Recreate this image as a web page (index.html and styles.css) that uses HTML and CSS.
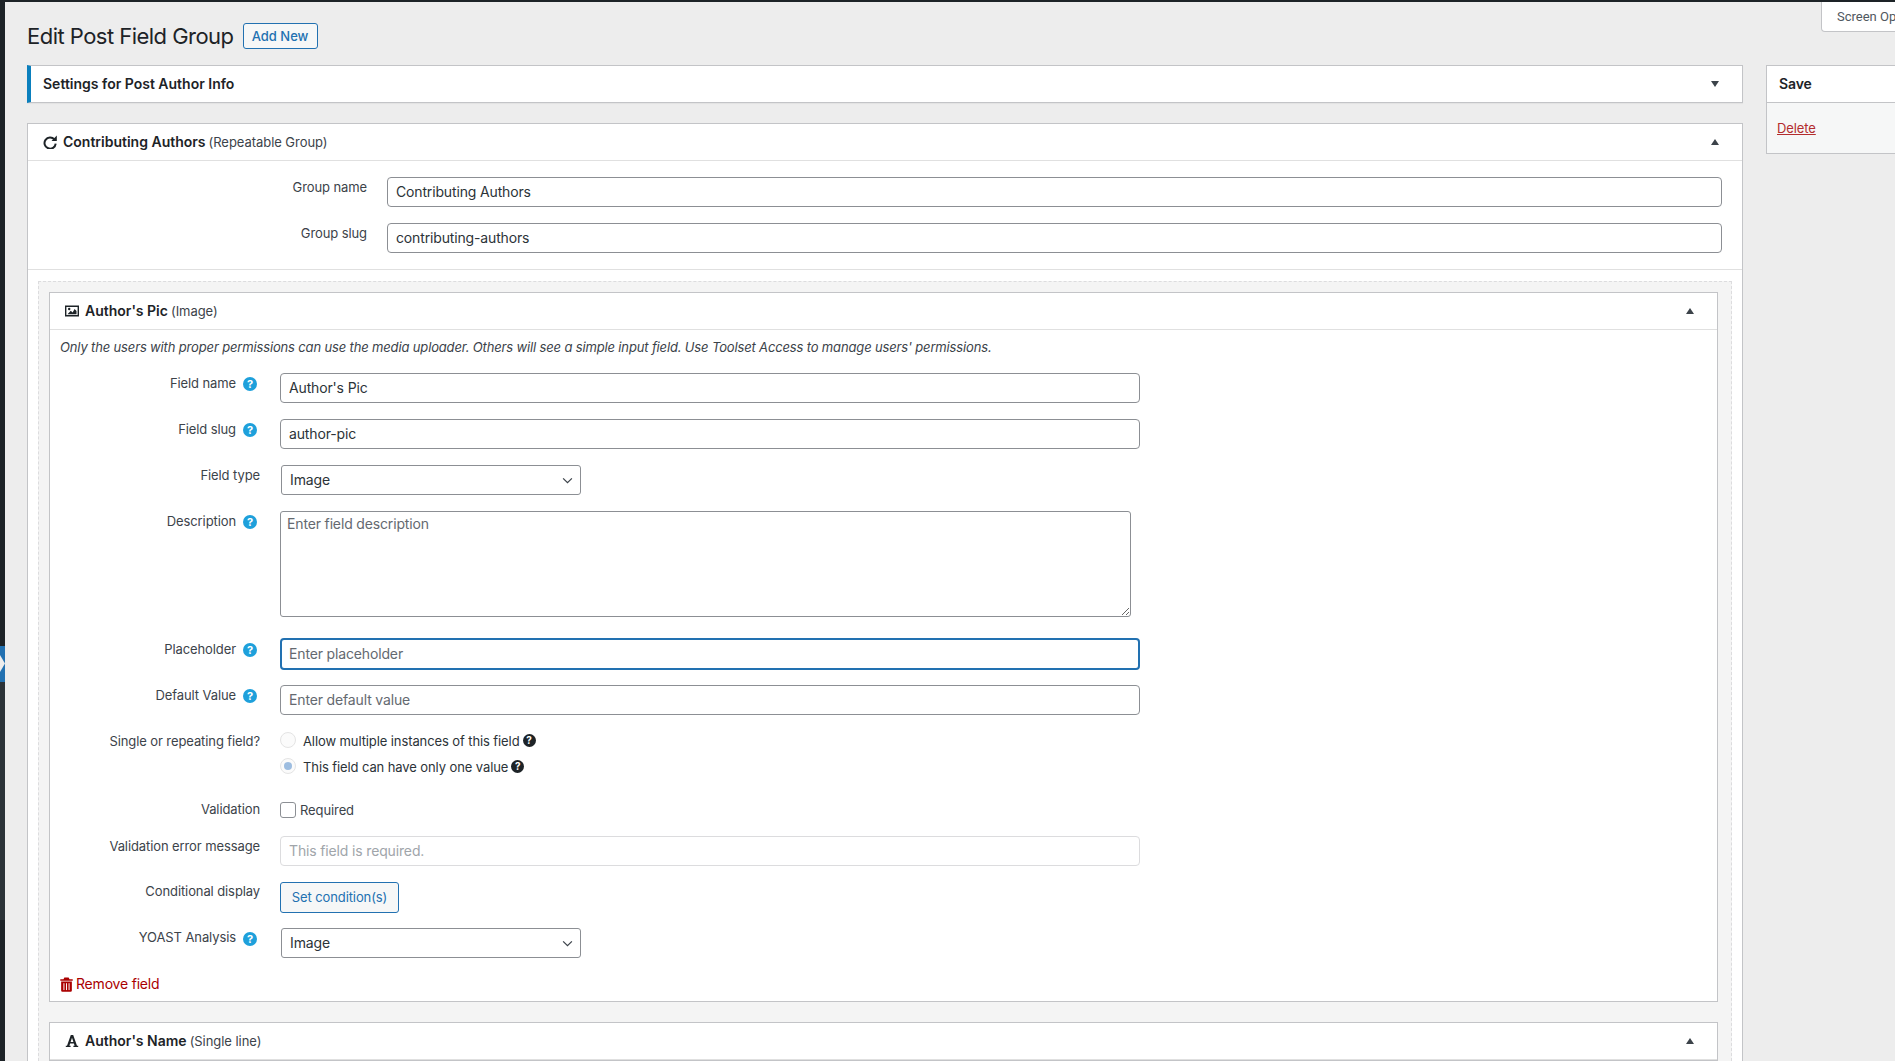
FILE: index.html
```html
<!DOCTYPE html>
<html>
<head>
  <title>Edit Post Field Group</title>
  <meta name="viewport" content="width=device-width, initial-scale=1.0">
  <link rel="stylesheet" href="styles.css">
</head>
<body>

  <div class="topbar"></div>

  <div class="page">
    <!-- admin menu, only its edge is visible -->
    <div class="sidebar">
      <div class="side-top"></div>
      <div class="side-collapse">
        <svg viewBox="0 0 5 36" width="5" height="36"><path d="M0 9 L5 17.5 L0 26 Z" fill="#ededed"/></svg>
      </div>
      <div class="side-mid"></div>
      <div class="side-bottom"></div>
    </div>

    <div class="content">
      <div class="screen-options">Screen Options</div>

      <div class="title-row">
        <h1>Edit Post Field Group</h1>
        <a class="add-new">Add New</a>
      </div>

      <div class="columns">
        <div class="main-col">

          <div class="box box-settings">
            <div class="box-head">
              <span class="box-title">Settings for Post Author Info</span>
              <span class="arrow arrow-down"></span>
            </div>
          </div>

          <div class="box box-group">
            <div class="box-head box-head-line">
              <svg class="head-icon" viewBox="0 0 14 14" width="14" height="14"><path d="M11.4 4.4 A5.6 5.6 0 1 0 12.7 8.6" fill="none" stroke="#1d2327" stroke-width="2"/><path d="M13.8 0.6 V5.9 H8.5 Z" fill="#1d2327"/></svg>
              <span class="box-title">Contributing Authors</span>
              <span class="box-type">(Repeatable Group)</span>
              <span class="arrow arrow-up"></span>
            </div>

            <div class="group-fields">
              <div class="group-row">
                <label>Group name</label>
                <input type="text" class="text-input" value="Contributing Authors">
              </div>
              <div class="group-row">
                <label>Group slug</label>
                <input type="text" class="text-input" value="contributing-authors">
              </div>
            </div>

            <div class="drop-area">
              <div class="field-box">
                <div class="box-head box-head-line">
                  <svg class="head-icon" viewBox="0 0 14 12" width="14" height="12"><path d="M0.7 1.2 H13.3 V10.8 H0.7 Z" fill="none" stroke="#1d2327" stroke-width="1.4"/><path d="M2.5 9.2 L5.8 5.8 L7.6 7.4 L9.6 4 L11.5 6 V9.2 Z" fill="#1d2327"/><circle cx="4.2" cy="4" r="1.2" fill="#1d2327"/></svg>
                  <span class="box-title">Author's Pic</span>
                  <span class="box-type">(Image)</span>
                  <span class="arrow arrow-up"></span>
                </div>

                <div class="field-body">
                  <p class="field-note">Only the users with proper permissions can use the media uploader. Others will see a simple input field. Use Toolset Access to manage users' permissions.</p>

                  <div class="row">
                    <label>Field name <span class="help">?</span></label>
                    <input type="text" class="text-input wide" value="Author's Pic">
                  </div>
                  <div class="row">
                    <label>Field slug <span class="help">?</span></label>
                    <input type="text" class="text-input wide" value="author-pic">
                  </div>
                  <div class="row">
                    <label>Field type</label>
                    <div class="select-box">Image
                      <svg viewBox="0 0 12 8" width="11" height="7"><path d="M1 1.5 L6 6.5 L11 1.5" fill="none" stroke="#3c434a" stroke-width="1.4"/></svg>
                    </div>
                  </div>
                  <div class="row row-desc">
                    <label>Description <span class="help">?</span></label>
                    <div class="textarea-box">
                      <textarea placeholder="Enter field description"></textarea>
                    </div>
                  </div>
                  <div class="row row-focus">
                    <label>Placeholder <span class="help">?</span></label>
                    <input type="text" class="text-input wide focused" placeholder="Enter placeholder">
                  </div>
                  <div class="row row-default">
                    <label>Default Value <span class="help">?</span></label>
                    <input type="text" class="text-input wide" placeholder="Enter default value">
                  </div>
                  <div class="row row-radio">
                    <label>Single or repeating field?</label>
                    <div class="radio-list">
                      <div class="radio-item"><span class="radio"></span>Allow multiple instances of this field<span class="help-dark">?</span></div>
                      <div class="radio-item"><span class="radio radio-on"></span>This field can have only one value<span class="help-dark">?</span></div>
                    </div>
                  </div>
                  <div class="row row-check">
                    <label>Validation</label>
                    <div class="check-item"><span class="checkbox"></span>Required</div>
                  </div>
                  <div class="row row-error">
                    <label>Validation error message</label>
                    <input type="text" class="text-input wide disabled" placeholder="This field is required.">
                  </div>
                  <div class="row row-cond">
                    <label>Conditional display</label>
                    <a class="cond-btn">Set condition(s)</a>
                  </div>
                  <div class="row row-yoast">
                    <label>YOAST Analysis <span class="help">?</span></label>
                    <div class="select-box">Image
                      <svg viewBox="0 0 12 8" width="11" height="7"><path d="M1 1.5 L6 6.5 L11 1.5" fill="none" stroke="#3c434a" stroke-width="1.4"/></svg>
                    </div>
                  </div>

                  <a class="remove-field">
                    <svg viewBox="0 0 12 14" width="13" height="15"><path d="M4 0.5 H8 L8.8 2 H11.8 V3.4 H0.2 V2 H3.2 Z M1 4.3 H11 V12.5 Q11 13.8 9.8 13.8 H2.2 Q1 13.8 1 12.5 Z" fill="#a00"/><path d="M3.6 5.8 V12.2 M6 5.8 V12.2 M8.4 5.8 V12.2" stroke="#fff" stroke-width="0.9"/></svg>
                    Remove field
                  </a>
                </div>
              </div>

              <div class="field-box">
                <div class="box-head box-head-line">
                  <svg class="head-icon" viewBox="0 0 14 14" width="14" height="14"><path d="M0.8 13 V11.8 H2 L5.8 1 H8.2 L12 11.8 H13.2 V13 H8.4 V11.8 H9.6 L8.9 9.6 H5.1 L4.4 11.8 H5.6 V13 Z M5.6 8 H8.4 L7 3.8 Z" fill="#1d2327" fill-rule="evenodd"/></svg>
                  <span class="box-title">Author's Name</span>
                  <span class="box-type">(Single line)</span>
                  <span class="arrow arrow-up"></span>
                </div>
              </div>
            </div>
          </div>

        </div>

        <div class="side-col">
          <div class="save-box">
            <div class="save-head">Save</div>
            <div class="save-foot"><a>Delete</a></div>
          </div>
        </div>
      </div>
    </div>
  </div>

</body>
</html>
```

FILE: styles.css
```css
html, body {
  margin: 0;
  height: 1061px;
  overflow: hidden;
}

body {
  background: #ededed;
  color: #3c434a;
  font-family: Inter, Roboto, sans-serif;
  font-size: 13px;
  letter-spacing: -0.1px;
}

.topbar {
  height: 2px;
  background: #1d2327;
}

.page {
  display: flex;
  height: 1059px;
}

.sidebar {
  width: 5px;
  flex: none;
  display: flex;
  flex-direction: column;
}

.side-top {
  height: 644px;
  background: #1d2327;
}

.side-collapse {
  height: 36px;
  background: #2271b1;
}

.side-collapse svg {
  display: block;
}

.side-mid {
  height: 238px;
  background: #2c3338;
}

.side-bottom {
  flex: 1;
  background: #1d2327;
}

.content {
  flex: 1;
  min-width: 0;
  position: relative;
  padding-left: 22px;
}

.screen-options {
  position: absolute;
  top: 0;
  left: 1816px;
  width: 120px;
  height: 30px;
  box-sizing: border-box;
  padding: 7px 0 0 15px;
  background: #fff;
  border: 1px solid #c3c4c7;
  border-top: none;
  border-radius: 0 0 0 4px;
  color: #50575e;
  font-family: Roboto, sans-serif;
  letter-spacing: 0;
  white-space: nowrap;
}

.title-row {
  display: flex;
  align-items: center;
  height: 58px;
  padding-top: 5px;
}

h1 {
  margin: 0 9px 0 0;
  font-size: 22px;
  font-weight: 400;
  letter-spacing: -0.53px;
  color: #1d2327;
}

.add-new {
  box-sizing: border-box;
  width: 75px;
  height: 26px;
  line-height: 24px;
  text-align: center;
  border: 1px solid #2271b1;
  border-radius: 3px;
  background: #f6f7f7;
  color: #2271b1;
  font-weight: 500;
  letter-spacing: 0;
}

.columns {
  display: flex;
  align-items: flex-start;
}

.main-col {
  width: 1716px;
  flex: none;
}

.side-col {
  margin-left: 23px;
  width: 300px;
  flex: none;
}

.box {
  background: #fff;
  border: 1px solid #c3c4c7;
  box-sizing: border-box;
}

.box-settings {
  border-left: 4px solid #0a7fbd;
  margin-bottom: 20px;
  box-shadow: 0 1px 1px rgba(0, 0, 0, .04);
}

.box-settings .box-head {
  padding-left: 12px;
}

.box-head {
  display: flex;
  align-items: center;
  box-sizing: border-box;
  height: 36px;
  padding: 0 23px 1px 15px;
  font-size: 14px;
  color: #1d2327;
}

.box-head-line {
  height: 37px;
  border-bottom: 1px solid #e0e0e0;
}

.box-title {
  font-weight: 600;
  letter-spacing: 0;
}

.box-type {
  margin-left: 3px;
  font-size: 13px;
  letter-spacing: -0.05px;
  color: #3c434a;
}

.head-icon {
  margin-right: 6px;
  flex: none;
}

.arrow {
  margin-left: auto;
  width: 0;
  height: 0;
  border-left: 4px solid transparent;
  border-right: 4px solid transparent;
}

.arrow-down {
  border-top: 6px solid #3c434a;
}

.arrow-up {
  border-bottom: 6px solid #3c434a;
}

.group-fields {
  padding: 16px 20px 16px 0;
  border-bottom: 1px solid #e0e0e0;
}

.group-row {
  display: flex;
  align-items: flex-start;
  gap: 20px;
  margin-bottom: 16px;
}

.group-row:last-child {
  margin-bottom: 0;
}

.group-row label {
  width: 339px;
  text-align: right;
  flex: none;
  line-height: 20px;
}

.text-input {
  flex: 1;
  box-sizing: border-box;
  height: 30px;
  padding: 0 8px 2px;
  border: 1px solid #8c8f94;
  border-radius: 4px;
  background: #fff;
  color: #2c3338;
  font-family: inherit;
  font-size: 14px;
  letter-spacing: -0.15px;
  outline: none;
  min-width: 0;
}

.text-input::placeholder,
textarea::placeholder {
  color: #646970;
  opacity: 1;
}

.drop-area {
  margin: 11px 10px 0 10px;
  padding: 10px 13px 0 10px;
  background: #f4f4f4;
  border: 1px dashed #dcdcde;
  border-bottom: none;
}

.field-box {
  background: #fff;
  border: 1px solid #c3c4c7;
  margin-bottom: 20px;
}

.field-body {
  padding: 0 10px;
  height: 671px;
  box-sizing: border-box;
}

.field-note {
  margin: 0;
  padding-top: 8px;
  height: 43px;
  box-sizing: border-box;
  font-style: italic;
  line-height: 18px;
  letter-spacing: -0.15px;
}

.row {
  display: flex;
  align-items: flex-start;
  gap: 20px;
  margin-bottom: 16px;
}

.row label {
  width: 200px;
  flex: none;
  box-sizing: border-box;
  display: flex;
  justify-content: flex-end;
  gap: 7px;
  line-height: 20px;
  white-space: nowrap;
}

.row label .help {
  margin: 4px 3px 0 0;
}

.wide {
  flex: none;
  width: 860px;
}

.help {
  display: inline-block;
  width: 14px;
  height: 14px;
  line-height: 14px;
  border-radius: 50%;
  background: #1ea0db;
  color: #fff;
  font-size: 11px;
  font-weight: 700;
  text-align: center;
  flex: none;
}

.help-dark {
  display: inline-block;
  width: 13px;
  height: 13px;
  line-height: 13px;
  margin-left: 3px;
  border-radius: 50%;
  background: #1d2327;
  color: #fff;
  font-size: 10px;
  font-weight: 700;
  text-align: center;
}

.select-box {
  box-sizing: border-box;
  width: 300px;
  height: 30px;
  margin-left: 1px;
  padding: 0 7px 0 8px;
  line-height: 28px;
  border: 1px solid #8c8f94;
  border-radius: 3px;
  background: #fff;
  color: #2c3338;
  font-size: 14px;
  display: flex;
  justify-content: space-between;
  align-items: center;
}

.textarea-box {
  width: 851px;
  height: 106px;
}

textarea {
  box-sizing: border-box;
  display: block;
  width: 100%;
  height: 100%;
  padding: 3px 6px;
  border: 1px solid #8c8f94;
  border-radius: 3px;
  font-family: inherit;
  font-size: 14px;
  letter-spacing: -0.15px;
  color: #2c3338;
  outline: none;
}

.row-desc {
  margin-bottom: 21px;
}

.row-focus {
  margin-bottom: 15px;
}

.row-focus label {
  padding-top: 1px;
}

.focused {
  height: 32px;
  border: 2px solid #2271b1;
  padding: 0 7px 2px;
}

.row-default {
  margin-bottom: 17px;
}

.radio-list {
  display: flex;
  flex-direction: column;
  gap: 9px;
}

.radio-item {
  display: flex;
  align-items: center;
  height: 17px;
  color: #2c3338;
}

.radio {
  box-sizing: border-box;
  width: 16px;
  height: 16px;
  margin: -2px 7px 0 0;
  border-radius: 50%;
  border: 1px solid #e4e4e4;
  background: #fbfbfb;
  flex: none;
  position: relative;
}

.radio-on::after {
  content: "";
  position: absolute;
  left: 3px;
  top: 3px;
  width: 8px;
  height: 8px;
  border-radius: 50%;
  background: #9dbde0;
}

.row-radio {
  margin-bottom: 26px;
}

.check-item {
  display: flex;
  align-items: center;
  gap: 4px;
  height: 17px;
  color: #3c434a;
}

.checkbox {
  box-sizing: border-box;
  width: 16px;
  height: 16px;
  border: 1px solid #8c8f94;
  border-radius: 3px;
  background: #fff;
}

.row-check {
  margin-bottom: 18px;
}

.row-check label {
  line-height: 17px;
}

.row-radio label {
  line-height: 19px;
}

.disabled {
  border-color: #dcdcde;
}

.disabled::placeholder {
  color: #a0a5aa;
}

.row-cond {
  margin-bottom: 15px;
}

.row-cond label,
.row-yoast label {
  line-height: 18px;
}

.cond-btn {
  box-sizing: border-box;
  height: 31px;
  width: 119px;
  line-height: 29px;
  text-align: center;
  border: 1px solid #2271b1;
  border-radius: 3px;
  background: #f6f7f7;
  color: #2271b1;
}

.remove-field {
  display: flex;
  align-items: center;
  gap: 3px;
  color: #a00;
  font-size: 14px;
  letter-spacing: -0.2px;
  line-height: 20px;
}

.save-box {
  background: #fff;
  border: 1px solid #c3c4c7;
}

.save-head {
  height: 36px;
  line-height: 36px;
  padding-left: 12px;
  font-size: 14px;
  font-weight: 600;
  color: #1d2327;
  border-bottom: 1px solid #c3c4c7;
}

.save-foot {
  height: 50px;
  padding: 0 10px;
  line-height: 50px;
  background: #f6f7f7;
}

.save-foot a {
  color: #b32d2e;
  text-decoration: underline;
}
```
